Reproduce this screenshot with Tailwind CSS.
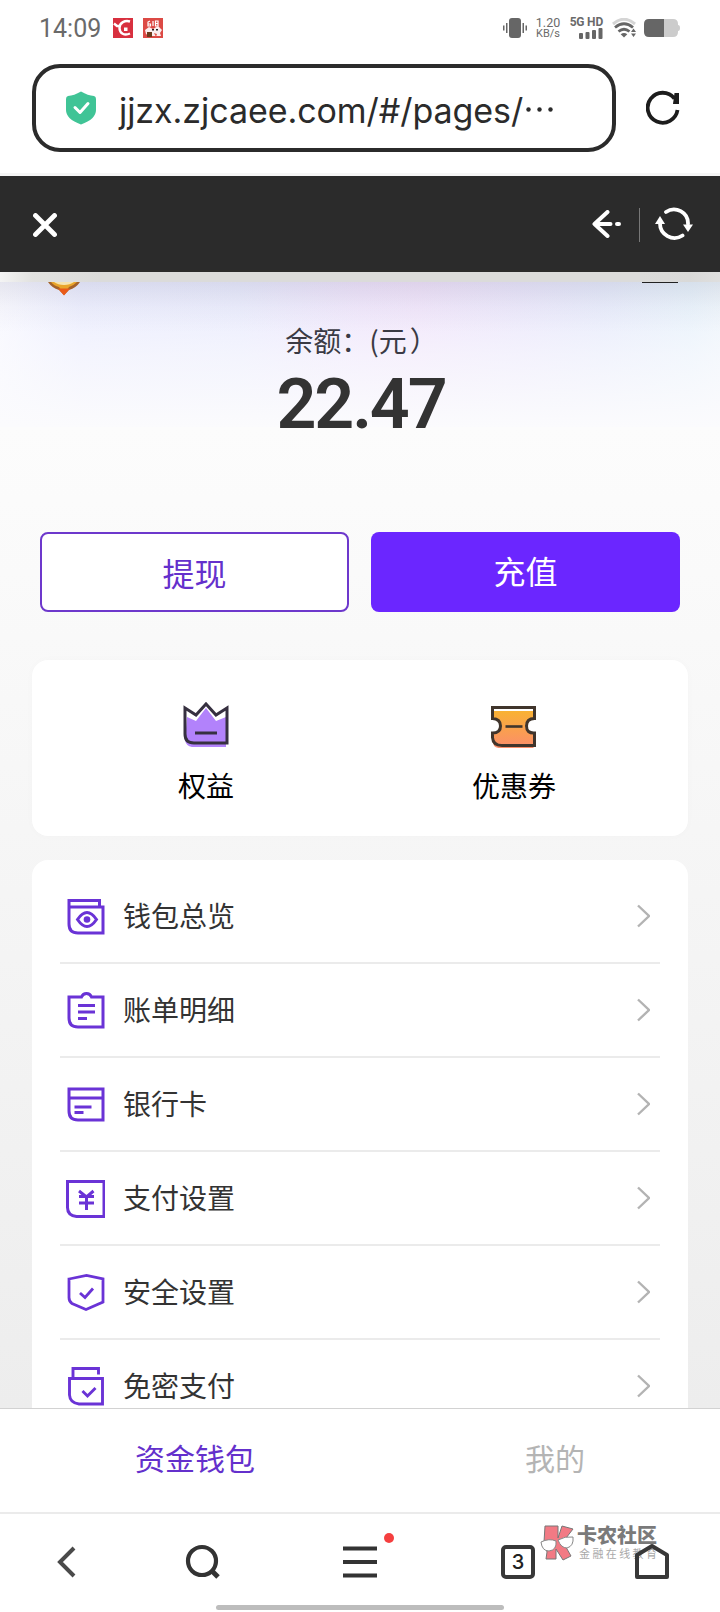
<!DOCTYPE html>
<html lang="zh-CN">
<head>
<meta charset="utf-8">
<title>资金钱包</title>
<script src="https://cdn.jsdelivr.net/npm/@tailwindcss/browser@4"></script>
</head>
<body class="w-[720px] h-[1612px] overflow-hidden bg-white flex flex-col font-['Noto_Sans_CJK_SC',sans-serif] text-[#333]">

<!-- status bar -->
<div class="h-14 shrink-0 flex items-center pl-[39px] pr-10 font-[Roboto,sans-serif] text-[#6a6a6a]">
  <span class="text-[25px] leading-none">14:09</span>
  <svg class="ml-[12px]" width="20" height="20" viewBox="0 0 20 20"><rect width="20" height="20" fill="#d8303f"/><path d="M1 5.500l3 2.500h4M17 3.500C12 2 6.500 4.500 6.500 10s5 8 10.500 5.500" fill="none" stroke="#fff" stroke-width="2.400"/><path d="M11 9.500h3.500v3.500H11z" fill="#fff"/></svg>
  <svg class="ml-[10px]" width="20" height="20" viewBox="0 0 20 20"><rect width="20" height="20" fill="#dc4a45"/><path d="M7 3L5 4v4h2.500V6H5M10 3v5M12.500 3h2.500v5h-2.500zM12.500 5.500H15" fill="none" stroke="#fff" stroke-width="1.200"/><path d="M2 12l4-3 4 2 5-3 4 4-2 3 1 3H6l-3-2z" fill="#fbeeee"/><path d="M4 14h5v5H4z" fill="#6b3b1c"/><path d="M9 11h2v1.500H9zM13 11h2v1.500h-2z" fill="#222"/><path d="M11 15l3 1-1 3z" fill="#e25a4e"/></svg>
  <div class="ml-auto flex items-center">
    <svg width="24" height="20" viewBox="0 0 24 20" fill="#666"><rect x="6" width="12" height="20" rx="3"/><path d="M0 7.500h1.500v5H0zM3 5h1.500v10H3zM19.500 5H21v10h-1.500zM22.500 7.500H24v5h-1.500z"/></svg>
    <div class="ml-[9px] w-6 text-[12.500px] leading-[11px] text-center whitespace-nowrap flex flex-col items-center"><span>1.20</span><span class="text-[11px]">KB/s</span></div>
    <div class="ml-[11px] w-8 flex flex-col items-end"><span class="text-[12px] leading-[11px] font-bold whitespace-nowrap tracking-[-0.200px]">5G HD</span>
      <svg width="24" height="11" viewBox="0 0 24 11" fill="#666"><rect x="0" y="5" width="4" height="6" rx="1"/><rect x="6.500" y="4" width="4" height="7" rx="1"/><rect x="13" y="2" width="4" height="9" rx="1"/><rect x="19.500" y="0" width="4" height="11" rx="1"/></svg></div>
    <svg class="ml-[9px]" width="24" height="20" viewBox="0 0 24 20" fill="none"><path d="M1 6Q12-3.500 23 6" stroke="#d5d5d5" stroke-width="3"/><path d="M3 9.500Q12 2 21 9.500M6.500 13.500Q12 9 17.500 13.500" stroke="#666" stroke-width="2.800"/><path d="M12 19.500l-3.300-3.300q3.300-2.200 6.600 0z" fill="#666"/><path d="M21.500 10.500l2.500 3.500h-5zM21.500 19l2.500-3.500h-5z" fill="#666"/></svg>
    <svg class="ml-[8px]" width="36" height="18" viewBox="0 0 36 18"><path d="M20 0h9q5 0 5 5v8q0 5-5 5h-9z" fill="#ccc"/><path d="M34 6q2 0 2 3t-2 3z" fill="#ccc"/><path d="M5 0h15v18H5q-5 0-5-5V5q0-5 5-5z" fill="#666"/></svg>
  </div>
</div>

<!-- address bar -->
<div class="h-[117px] shrink-0 flex items-start pt-2 pl-8">
  <div class="w-[584px] h-[88px] shrink-0 rounded-[28px] border-4 border-[#2b2b2b] flex items-center pl-[29px]">
    <svg width="32" height="34" viewBox="0 0 32 34"><path d="M16 .5q7 4 13 4.500 2 .5 2 3v11q0 9-15 14.500Q1 28 1 19V8q0-2.500 2-3Q9 4.500 16 .5z" fill="#40c496"/><path d="M10 16.500l5 5 8-9" fill="none" stroke="#fff" stroke-width="3" stroke-linecap="round" stroke-linejoin="round"/></svg>
    <span class="ml-[22px] mt-[5px] font-[Inter,sans-serif] text-[34px] leading-none tracking-[-0.060px] text-[#2b2b2b] whitespace-nowrap">jjzx.zjcaee.com/#/pages/</span>
    <svg class="ml-[3px] mt-[2px]" width="28" height="5" viewBox="0 0 28 5" fill="#2b2b2b"><circle cx="2.500" cy="2.500" r="2.200"/><circle cx="13.500" cy="2.500" r="2.200"/><circle cx="24.500" cy="2.500" r="2.200"/></svg>
  </div>
  <svg class="ml-[30px] mt-[26px]" width="34" height="35" viewBox="0 0 34 35" fill="none" stroke="#1c1c1c" stroke-width="3.800"><path d="M28.500 8.500A15 15 0 1 0 31.500 20"/><path d="M28.500 3H33v11h-6z" fill="#1c1c1c" stroke="none"/></svg>
</div>

<!-- web view header -->
<header class="h-[99px] shrink-0 bg-[#2b2b2b] border-t-3 border-[#f5f5f5] flex items-center pl-[33px] pr-[27px]">
  <svg width="24" height="24" viewBox="0 0 24 24" class="mt-[2px]" stroke="#fff" stroke-width="4.800" stroke-linecap="round"><path d="M2.500 2.500l19 19M21.500 2.500l-19 19"/></svg>
  <svg class="ml-auto" width="30" height="28" viewBox="0 0 30 28" fill="none" stroke="#fff" stroke-width="4" stroke-linecap="round" stroke-linejoin="round"><path d="M15.500 2L2.500 14l13 12M3 14h15.500M25 14h2"/></svg>
  <div class="ml-[17px] w-px h-[34px] mt-[2px] bg-[#777]"></div>
  <svg class="ml-[15px]" width="38" height="34" viewBox="0 0 38 34" fill="none" stroke="#fff" stroke-width="3.800" stroke-linecap="round"><path d="M11 5A14 14 0 0 1 33 17M27.500 28.500A14.500 14.500 0 0 1 5 16"/><path d="M28 17.500h10l-5 7.500zM0 17h10l-5-8z" fill="#fff" stroke="none"/></svg>
</header>

<!-- page -->
<main class="h-[1136px] shrink-0 overflow-hidden flex flex-col bg-[linear-gradient(to_bottom,#fcfcfc_155px,#fafafa_300px,#ededed_1136px)]">
  <div class="h-[10px] shrink-0 bg-[linear-gradient(to_right,#f4f4f4,#e2e2e0_32px,#dbdbda_100px,#dbdbda_640px,#d9d9d8_690px,#dfdfdf)]"></div>
  <section class="h-[145px] shrink-0 flex flex-col items-center bg-[linear-gradient(to_bottom,rgba(100,100,125,.12),rgba(110,110,135,.04)_25px,rgba(120,120,140,0)_50px),linear-gradient(to_bottom,rgba(252,252,254,0),rgba(251,251,254,.6)_50%,#fbfbfd),linear-gradient(to_right,#f8f8ff,#eaecfe_80px,#e8eafd_240px,#eee3fb_360px,#efe2fa_420px,#e9e5fb_520px,#e5e9fb_600px,#e6f1fb_690px,#ecf4fb)]">
    <div class="w-full h-[14px] pl-12 pr-[42px] flex justify-between items-start">
      <svg width="32" height="14" viewBox="0 0 32 14"><path d="M0 0h32q-4 6-11 8l-5 5-5-5Q4 6 0 0z" fill="#a4622a"/><path d="M3 0h26q-4 4-8 5l-5 7-5-7Q6 4 3 0z" fill="#e9a52b"/><path d="M6 0h20q-4 3-10 3T6 0z" fill="#f6e4b0"/><path d="M10 6.500h12l-6 7z" fill="#ea5a18"/></svg>
      <div class="w-9 h-px bg-[#222]"></div>
    </div>
    <div class="mt-[24px] text-[28px] leading-[40px] text-[#3a3a44] whitespace-nowrap">余额：(元<span class="ml-[3px] mr-[-3px]">）</span></div>
    <div class="mt-[9px] ml-[2px] font-[Roboto,sans-serif] font-semibold text-[70px] leading-[70px] tracking-[-2.200px] text-[#333]">22.47</div>
  </section>
  <section class="mt-[105px] px-10 h-20 shrink-0 flex gap-[22px] text-[32px]">
    <div class="w-[309px] shrink-0 rounded-[8px] border-2 border-[#6d38cc] bg-white text-[#6430cc] flex items-center justify-center">提现</div>
    <div class="w-[309px] shrink-0 rounded-[8px] bg-[#6b26ff] text-white flex items-center justify-center pb-1">充值</div>
  </section>
  <section class="mt-12 mx-8 h-44 shrink-0 rounded-[16px] bg-white shadow-[0_0_8px_rgba(0,0,0,0.02)] px-5 flex text-[28px] leading-[40px] text-black">
    <div class="flex-1 flex flex-col items-center pt-[41px]">
      <svg width="46" height="48" viewBox="0 0 46 48"><path d="M4 16l9 4 10-13 10 13 10-4v30H9q-6-1-7-7z" fill="#b282fb"/><path d="M2 7l11 7L23 3l10 11 11-7v35H11q-9 0-9-9z" fill="none" stroke="#363040" stroke-width="3"/><path d="M12 32h22" stroke="#363040" stroke-width="3"/></svg>
      <span class="mt-[16px]">权益</span>
    </div>
    <div class="flex-1 flex flex-col items-center pt-[41px]">
      <svg width="46" height="48" viewBox="0 0 46 48"><defs><linearGradient id="tk" x2="0" y2="1"><stop stop-color="#f9b233"/><stop offset="1" stop-color="#fb8d6b"/></linearGradient></defs><path d="M1.500 10h41v8q-8 0-8 7t8 7v15h-35q-6-1-6-8v-7q8 0 8-7t-8-7z" fill="url(#tk)"/><path d="M1.500 6.500h42v11q-8 0-8 7.500t8 7v12.500H11q-9 0-9.500-8V32q8 0 8-7t-8-7.500z" fill="none" stroke="#40352c" stroke-width="3"/><path d="M14.500 25.500h17" stroke="#40352c" stroke-width="2.600"/></svg>
      <span class="mt-[16px]">优惠券</span>
    </div>
  </section>
  <section class="mt-6 mx-8 h-[620px] shrink-0 rounded-t-[16px] bg-white px-7 pt-[10px] text-[28px] text-[#333] [&>div]:h-[94px] [&>div]:flex [&>div]:items-center [&>div]:border-b-2 [&>div]:border-[#ebebeb] [&_span]:ml-[18px] [&_span]:pb-[2px] [&_span]:flex-1 [&>div]:pl-[5px] [&>div]:pr-[10px]">
    <div><svg width="40" height="40" viewBox="0 0 40 40" fill="none" stroke="#6a33d6" stroke-width="3"><path d="M4 4.500h30.500v6.500h3.500v26h-25q-9 0-9-9zM4 11h31"/><path d="M12.500 23.500q9.500-14 19 0-9.500 14-19 0z"/><circle cx="22" cy="23.500" r="3.300" fill="#6a33d6" stroke="none"/></svg><span>钱包总览</span><svg width="13" height="24" viewBox="0 0 13 24" fill="none" stroke="#b3b3b3" stroke-width="2.400"><path d="M1 1.500L12 12 1 22.500"/></svg></div>
    <div><svg width="40" height="40" viewBox="0 0 40 40" fill="none" stroke="#6a33d6" stroke-width="3"><path d="M4 7H16.500q1.500-3.500 5-3.500T26.500 7H38v30h-25q-9 0-9-9zM13 15.500h17M13 22h17M13 28.500h9"/></svg><span>账单明细</span><svg width="13" height="24" viewBox="0 0 13 24" fill="none" stroke="#b3b3b3" stroke-width="2.400"><path d="M1 1.500L12 12 1 22.500"/></svg></div>
    <div><svg width="40" height="40" viewBox="0 0 40 40" fill="none" stroke="#6a33d6" stroke-width="3"><path d="M4 5h34V36h-25q-9 0-9-9zM4 14h34M9.500 23h17M9.500 28.500h9"/></svg><span>银行卡</span><svg width="13" height="24" viewBox="0 0 13 24" fill="none" stroke="#b3b3b3" stroke-width="2.400"><path d="M1 1.500L12 12 1 22.500"/></svg></div>
    <div><svg width="40" height="40" viewBox="0 0 40 40" fill="none" stroke="#6a33d6" stroke-width="3"><path d="M2.500 3.500h36.500v35H11.500q-9-1-9-9z"/><path d="M14 13l7.500 6 7-6M14 18.500h15M14 25h15M21.500 18v14"/></svg><span>支付设置</span><svg width="13" height="24" viewBox="0 0 13 24" fill="none" stroke="#b3b3b3" stroke-width="2.400"><path d="M1 1.500L12 12 1 22.500"/></svg></div>
    <div><svg width="40" height="40" viewBox="0 0 40 40" fill="none" stroke="#6a33d6" stroke-width="2.800"><path d="M4 7l17.500-3.500L38 7v23l-17 7.500-14-6q-3-2-3-6zM15 21l5 4.500 8-9"/></svg><span>安全设置</span><svg width="13" height="24" viewBox="0 0 13 24" fill="none" stroke="#b3b3b3" stroke-width="2.400"><path d="M1 1.500L12 12 1 22.500"/></svg></div>
    <div><svg width="40" height="40" viewBox="0 0 40 40" fill="none" stroke="#6a33d6" stroke-width="2.900"><path d="M8 12V2.500h25.500v6M4.500 12.500h33V38H14q-9-1-9.500-9zM17.500 25l5 5 8-8"/></svg><span>免密支付</span><svg width="13" height="24" viewBox="0 0 13 24" fill="none" stroke="#b3b3b3" stroke-width="2.400"><path d="M1 1.500L12 12 1 22.500"/></svg></div>
  </section>
</main>

<!-- page tabs -->
<nav class="h-[104px] shrink-0 border-t border-[#d2d2d2] bg-white flex items-center text-[30px]">
  <div class="w-[390px] text-center text-[#6430cc] pb-[6px]">资金钱包</div>
  <div class="w-[330px] text-center text-[#b4b4b4] pb-[6px]">我的</div>
</nav>

<!-- browser toolbar -->
<footer class="relative h-[100px] shrink-0 border-t-2 border-[#ebebeb] bg-white">
  <div class="flex pt-[29px] pl-12 items-start">
    <svg width="36" height="38" viewBox="0 0 36 38" fill="none" stroke="#4a4a4a" stroke-width="4"><path d="M26 5L12 19l14 14"/></svg>
    <svg class="ml-[100px]" width="36" height="38" viewBox="0 0 36 38" fill="none" stroke="#333" stroke-width="4.200"><circle cx="18" cy="18" r="14"/><path d="M27 27l7 7" stroke-width="5"/></svg>
    <svg class="ml-[122px]" width="36" height="38" viewBox="0 0 36 38" stroke="#333" stroke-width="4"><path d="M1 5.500h34M1 19h34M1 32.500h34"/></svg>
    <div class="ml-[123px] mt-[2px] size-[34px] rounded-[5px] border-4 border-[#383838] flex items-center justify-center font-[Inter,sans-serif] font-medium text-[20px] leading-none text-[#222]">3</div>
    <svg class="ml-[99px] relative z-10" width="36" height="38" viewBox="0 0 36 38" fill="none" stroke="#383838" stroke-width="4" stroke-linejoin="round"><path d="M3 12L18 3l15 9v22H3z"/></svg>
  </div>
  <div class="absolute left-[384px] top-[19px] size-[10px] rounded-full bg-[#f53f3f]"></div>
  <!-- community watermark -->
  <div class="absolute left-[540px] top-[11px] flex">
    <svg width="35" height="36" viewBox="0 0 35 36"><path d="M5 1h13v12L22 1l11 3-10 13 8 14-8 4-7-11v10H6l1-7-3-10z" fill="#f27a84" stroke="#777" stroke-width="1"/><path d="M1 17q8-4 15-1 1 9-7 10-7 0-8-9zM18 15q7-4 15-3 1 9-6 11-6 0-9-8z" fill="#fff" stroke="#888" stroke-width="1"/></svg>
    <div class="ml-[2px] flex flex-col whitespace-nowrap">
      <span class="h-[20px] text-[20px] leading-[20px] font-black text-[#7a7a7a]">卡农社区</span>
      <span class="mt-[1px] ml-[2px] h-[14px] text-[11px] leading-[14px] tracking-[2.400px] text-[#a8a8a8]">金融在线教育</span>
    </div>
  </div>
  <div class="absolute left-[216px] top-[91px] w-[288px] h-[5px] rounded-full bg-[#bdbdbd]"></div>
</footer>
</body>
</html>
